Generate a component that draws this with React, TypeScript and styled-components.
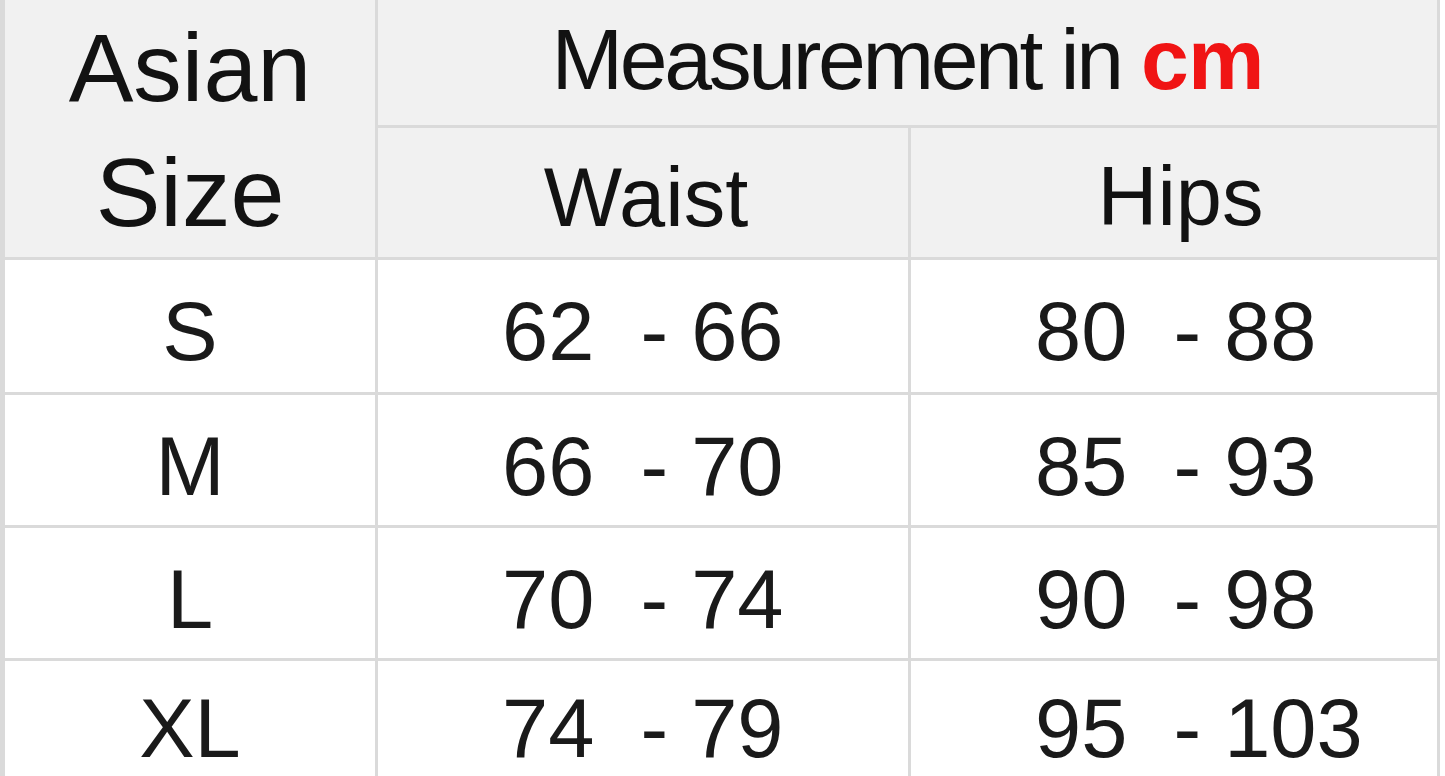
import React from "react";
import styled, { createGlobalStyle } from "styled-components";

const Global = createGlobalStyle`
  html, body { margin: 0; padding: 0; background: #ffffff; }
  body { font-family: "Liberation Sans", Arial, sans-serif; overflow: hidden; }
`;

const Page = styled.div`
  width: 1445px;
  height: 776px;
  overflow: hidden;
  background: #ffffff;
`;

const Sheet = styled.div`
  display: grid;
  width: 1440px;
  box-sizing: border-box;
  grid-template-columns: 370px 530px 526px;
  grid-template-rows: 125px 129px 132px 130px 130px 115px;
  gap: 3px;
  padding: 0 3px 0 5px;
  background: #dadada;
`;

const HeadCell = styled.div<{ $col: string; $row: string; $shift?: number; $dx?: number }>`
  grid-column: ${(p) => p.$col};
  grid-row: ${(p) => p.$row};
  background: #f1f1f1;
  display: flex;
  flex-direction: column;
  align-items: center;
  justify-content: center;
  color: #121212;
  padding-top: ${(p) => Math.max(0, p.$shift ?? 0)}px;
  padding-bottom: ${(p) => Math.max(0, -(p.$shift ?? 0))}px;
  padding-left: ${(p) => p.$dx ?? 0}px;
  box-sizing: border-box;
`;

const SizeLabel = styled.div`
  font-size: 97px;
  line-height: 125px;
  text-align: center;
`;

const Title = styled.div`
  font-size: 86px;
  letter-spacing: -3.4px;
  white-space: pre;
  line-height: 1;
`;

const Unit = styled.span`
  color: #f01414;
  font-weight: bold;
  letter-spacing: -1px;
`;

const ColLabel = styled.div`
  font-size: 83px;
  line-height: 1;
`;

const Cell = styled.div<{ $align: "center" | "start"; $indent: number; $top: number }>`
  background: #ffffff;
  display: flex;
  align-items: flex-start;
  justify-content: ${(p) => (p.$align === "center" ? "center" : "flex-start")};
  padding-left: ${(p) => p.$indent}px;
  padding-top: ${(p) => p.$top}px;
  box-sizing: border-box;
  font-size: 83px;
  line-height: 1;
  color: #1a1a1a;
  white-space: pre;
  overflow: hidden;
`;

const rows: [string, string, string][] = [
  ["S", "62  - 66", "80  - 88"],
  ["M", "66  - 70", "85  - 93"],
  ["L", "70  - 74", "90  - 98"],
  ["XL", "74  - 79", "95  - 103"],
];

const indents = [0, 124, 124];

export default function App() {
  return (
    <Page>
      <Global />
      <Sheet>
        <HeadCell $col="1" $row="1 / span 2" $shift={2}>
          <SizeLabel>
            Asian
            <br />
            Size
          </SizeLabel>
        </HeadCell>
        <HeadCell $col="2 / span 2" $row="1" $shift={-8}>
          <Title>
            Measurement in <Unit>cm</Unit>
          </Title>
        </HeadCell>
        <HeadCell $col="2" $row="2" $shift={10} $dx={6}>
          <ColLabel>Waist</ColLabel>
        </HeadCell>
        <HeadCell $col="3" $row="2" $shift={8} $dx={13}>
          <ColLabel>Hips</ColLabel>
        </HeadCell>
        {rows.map((r, ri) =>
          r.map((v, i) => (
            <Cell
              key={r[0] + i}
              $align={i === 0 ? "center" : "start"}
              $indent={indents[i]}
              $top={ri === rows.length - 1 ? 26 : 30}
            >
              {v}
            </Cell>
          ))
        )}
      </Sheet>
    </Page>
  );
}
